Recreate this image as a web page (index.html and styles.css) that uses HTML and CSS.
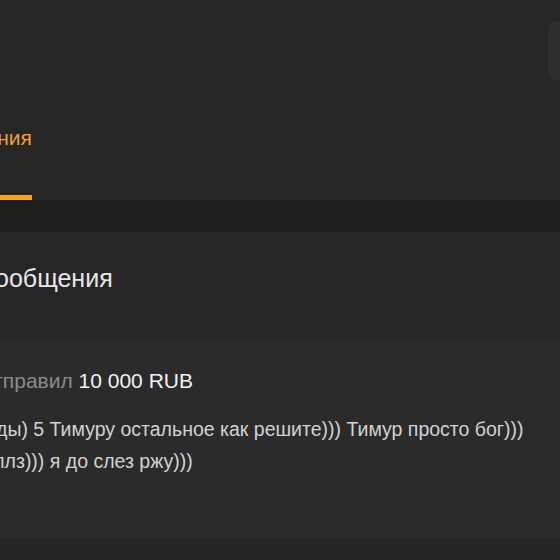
FILE: index.html
```html
<!DOCTYPE html>
<html lang="ru">
<head>
<meta charset="utf-8">
<link rel="stylesheet" href="styles.css">
</head>
<body>
<div class="page">
  <header class="header">
    <div class="topbar">
      <div class="topbtn"></div>
    </div>
    <nav class="tabs">
      <div class="tab">Сообщения</div>
    </nav>
  </header>
  <div class="band"></div>
  <section class="section">
    <h2 class="title">Сообщения</h2>
  </section>
  <article class="card">
    <div class="sender"><span class="verb">отправил</span> <span class="amount">10 000 RUB</span></div>
    <div class="message">
      <span class="line">ды) 5 Тимуру остальное как решите))) Тимур просто бог)))</span>
      <span class="line line-second">плз))) я до слез ржу)))</span>
    </div>
  </article>
</div>
</body>
</html>
```
FILE: styles.css
```css
html, body {
  margin: 0;
  padding: 0;
  background: #252525;
  overflow: hidden;
}
.page {
  width: 560px;
  height: 560px;
  overflow: hidden;
  font-family: "Liberation Sans", Arial, sans-serif;
  background: #252525;
}
.header {
  height: 200px;
  display: flex;
  flex-direction: column;
  background: #262626;
}
.topbar {
  display: flex;
  justify-content: flex-end;
  padding-top: 21px;
}
.topbtn {
  width: 60px;
  height: 59px;
  margin-right: -48px;
  background: #2e2e2e;
  border-radius: 9px;
}
.tabs {
  margin-top: auto;
  display: flex;
}
.tab {
  margin-left: -82px;
  color: #eba134;
  font-size: 21px;
  line-height: 24px;
  padding-bottom: 45px;
  border-bottom: 5px solid #f7a21b;
  white-space: nowrap;
}
.band {
  height: 32px;
  background: #1f1f1f;
}
.section {
  height: 108px;
  box-sizing: border-box;
  padding-top: 32px;
  background: #262626;
}
.title {
  margin: 0 0 0 -23px;
  font-weight: normal;
  font-size: 25px;
  line-height: 28px;
  color: #e8e8e8;
  white-space: nowrap;
}
.card {
  height: 198px;
  box-sizing: border-box;
  padding-top: 28px;
  background: #2b2b2b;
}
.sender {
  margin-left: -18px;
  font-size: 21px;
  line-height: 26px;
  white-space: nowrap;
}
.verb {
  color: #8c8c8c;
}
.amount {
  color: #f2f2f2;
}
.message {
  margin-top: 19px;
  margin-left: -4px;
  font-size: 19.5px;
  line-height: 32px;
  color: #d2d2d2;
  white-space: nowrap;
}
.line {
  display: block;
}
.line-second {
  margin-left: -2px;
}
```
